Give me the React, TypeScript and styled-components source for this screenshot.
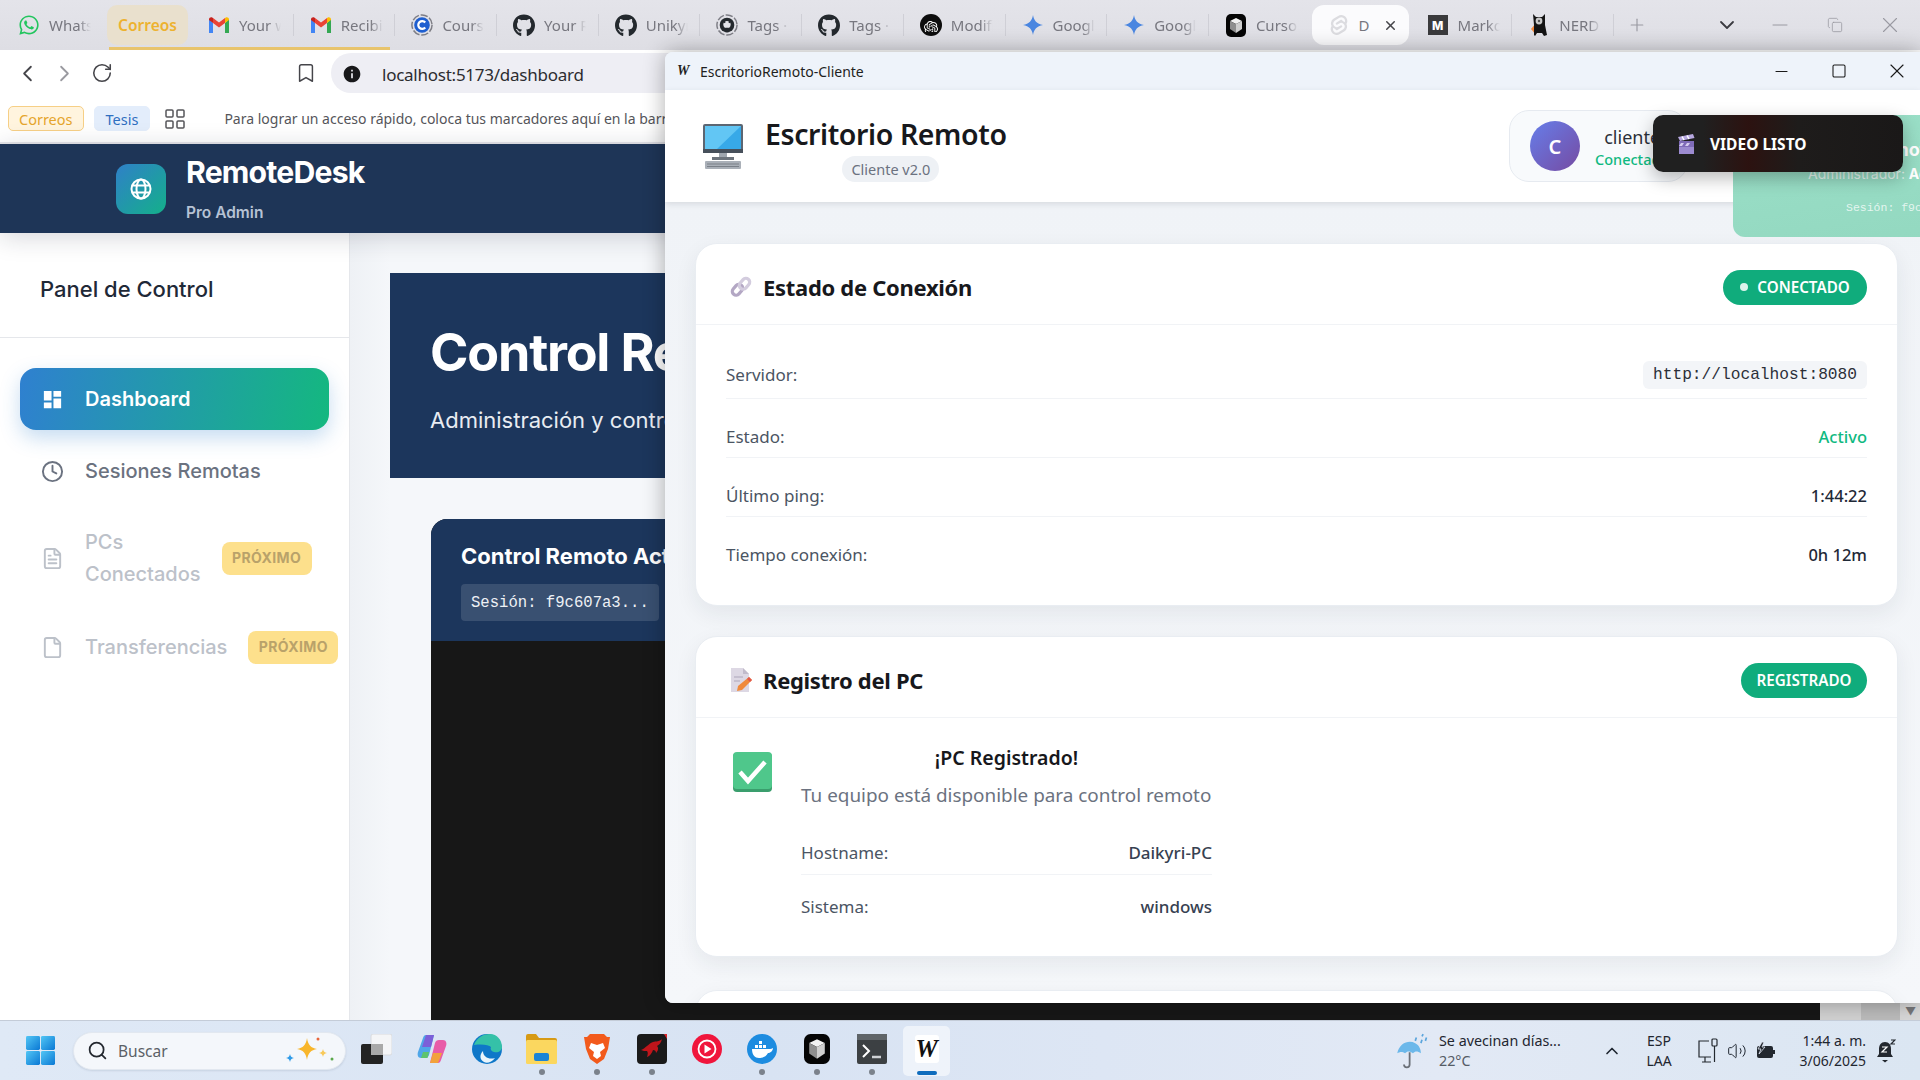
import React, { FC, ReactNode } from 'react'
import styled, { createGlobalStyle } from 'styled-components'
import {
  Bookmark,
  ChevronDown,
  ChevronLeft,
  ChevronRight,
  ChevronUp,
  Clock,
  Copy,
  File,
  FileText,
  LayoutGrid,
  Minus,
  Plus,
  RotateCw,
  Search,
  Square,
  Volume2,
  X,
} from 'lucide-react'
import { FaGithub, FaWhatsapp } from 'react-icons/fa'
import { MdDashboard, MdInfo } from 'react-icons/md'
import { SiOpenai, SiSvelte } from 'react-icons/si'

const SEGOE = `'Noto Sans', 'Open Sans', sans-serif`
const INTER = `Inter, 'Liberation Sans', sans-serif`
const MONO = `'Liberation Mono', 'DejaVu Sans Mono', monospace`

const GlobalStyle = createGlobalStyle`
  html, body {
    margin: 0;
    padding: 0;
    width: 1920px;
    height: 1080px;
    overflow: hidden;
    background: #fff;
  }
  * { box-sizing: border-box; }
`

const Desktop = styled.div`
  position: relative;
  width: 1920px;
  height: 1080px;
  display: flex;
  flex-direction: column;
  overflow: hidden;
  font-family: ${SEGOE};
`

/* ---------- browser ---------- */

const Browser = styled.div`
  flex: 1;
  min-height: 0;
  display: flex;
  flex-direction: column;
`

const TabStrip = styled.div`
  height: 50px;
  flex: none;
  display: flex;
  align-items: center;
  padding-left: 2px;
  background: linear-gradient(#e4e4ea, #dedee4);
`

const Tab = styled.div<{ $width?: number; $plain?: boolean }>`
  position: relative;
  width: ${({ $width }) => $width ?? 101.7}px;
  height: 40px;
  flex: none;
  display: flex;
  align-items: center;
  gap: 9px;
  padding-left: 16px;

  &::after {
    content: '';
    display: ${({ $plain }) => ($plain ? 'none' : 'block')};
    position: absolute;
    right: 0;
    top: 9px;
    bottom: 9px;
    width: 1px;
    background: #cfcfd6;
  }
`

const ActiveTab = styled(Tab)`
  background: #fbfbfd;
  border-radius: 12px;
  margin: 0 2px 0 1px;
`

const TabIconBox = styled.span`
  width: 22px;
  height: 24px;
  flex: none;
  display: flex;
  align-items: center;
  justify-content: center;
`

const TabLabel = styled.span`
  width: 42px;
  overflow: hidden;
  white-space: nowrap;
  font-size: 15px;
  color: #77777f;
  -webkit-mask-image: linear-gradient(90deg, #000 70%, transparent);
  mask-image: linear-gradient(90deg, #000 70%, transparent);
`

const ActiveLabel = styled.span`
  width: 15px;
  font-size: 15px;
  color: #77777f;
`

const TabGroup = styled.div`
  position: relative;
  display: flex;
  align-items: center;

  &::after {
    content: '';
    position: absolute;
    left: 2px;
    right: 5px;
    bottom: -5px;
    height: 3px;
    background: #e8c46c;
  }
`

const GroupChip = styled.div`
  width: 81px;
  height: 40px;
  margin-right: 4px;
  border-radius: 10px;
  display: flex;
  align-items: center;
  justify-content: center;
  background: #e9e0cd;
  color: #edb22f;
  font-size: 15.5px;
  font-weight: 600;
`

const StripButton = styled.span<{ $width: number; $color?: string }>`
  width: ${({ $width }) => $width}px;
  height: 40px;
  flex: none;
  display: flex;
  align-items: center;
  justify-content: center;
  color: ${({ $color }) => $color ?? '#9a9aa2'};
`

const WindowButtons = styled.div`
  margin-left: auto;
  padding-right: 3px;
  display: flex;
`

const Toolbar = styled.div`
  height: 46px;
  flex: none;
  display: flex;
  align-items: center;
  padding-left: 9px;
  background: #fff;
`

const NavButton = styled.span<{ $faded?: boolean }>`
  width: 37px;
  display: flex;
  justify-content: center;
  color: ${({ $faded }) => ($faded ? '#9a9aa0' : '#45454a')};
`

const BookmarkButton = styled(NavButton)`
  margin-left: 167px;
  margin-right: 7px;
`

const AddressBar = styled.div`
  flex: 1;
  height: 40px;
  display: flex;
  align-items: center;
  gap: 20px;
  padding: 2px 0 0 11px;
  border-radius: 20px 0 0 20px;
  background: #eeeef4;
  font-size: 17px;
  letter-spacing: -0.25px;
  color: #2c2c30;
`

const BookmarkBar = styled.div`
  height: 48px;
  flex: none;
  display: flex;
  align-items: center;
  padding: 0 0 1px 8px;
  background: #fff;
  border-bottom: 2px solid #e6e6ea;
  font-size: 14px;
  color: #55555a;
`

const BookmarkPill = styled.span<{ $tone: 'amber' | 'blue' }>`
  height: 25px;
  display: flex;
  align-items: center;
  padding: ${({ $tone }) => ($tone === 'amber' ? '0 10px' : '0 11px')};
  margin-right: 10px;
  border-radius: 5px;
  font-size: 14.5px;
  background: ${({ $tone }) => ($tone === 'amber' ? '#fff4de' : '#e3edfb')};
  border: 1px solid ${({ $tone }) => ($tone === 'amber' ? '#f6cf86' : '#e3edfb')};
  color: ${({ $tone }) => ($tone === 'amber' ? '#e5a52c' : '#2f6fc0')};
`

const BookmarkHint = styled.span`
  margin-left: 37px;
  white-space: nowrap;
`

const GridButton = styled.span`
  display: flex;
  margin-left: 3px;
  color: #55555a;
`

/* ---------- remote desk app ---------- */

const AppHeader = styled.header`
  position: relative;
  z-index: 2;
  height: 89px;
  flex: none;
  display: flex;
  align-items: center;
  gap: 20px;
  padding-left: 116px;
  background: #1e3557;
  box-shadow: 0 4px 24px rgba(20, 30, 50, 0.18);
`

const AppLogo = styled.div`
  width: 50px;
  height: 50px;
  border-radius: 12px;
  display: flex;
  align-items: center;
  justify-content: center;
  background: linear-gradient(135deg, #2f80c8, #14b08a);
`

const BrandText = styled.div`
  display: flex;
  flex-direction: column;
  gap: 16px;
  font-family: ${INTER};
`

const BrandName = styled.div`
  font-size: 30.2px;
  line-height: 32px;
  font-weight: 700;
  letter-spacing: -0.8px;
  color: #fff;
`

const BrandSub = styled.div`
  font-size: 15.5px;
  line-height: 18px;
  font-weight: 600;
  color: #b6c2d4;
`

const AppBody = styled.div`
  flex: 1;
  min-height: 0;
  display: flex;
  font-family: ${INTER};
`

const Sidebar = styled.aside`
  width: 350px;
  flex: none;
  background: #fff;
  border-right: 1px solid #e5e7eb;
`

const SidebarTitle = styled.div`
  height: 105px;
  padding: 41px 0 0 40px;
  border-bottom: 1px solid #e5e7eb;
  font-size: 22px;
  line-height: 30px;
  font-weight: 500;
  color: #1f2937;
`

const NavList = styled.nav`
  padding: 30px 12px 0 20px;
  display: flex;
  flex-direction: column;
`

const NavItem = styled.div<{ $active?: boolean; $disabled?: boolean; $height: number }>`
  height: ${({ $height }) => $height}px;
  margin-right: ${({ $active }) => ($active ? '8px' : '0')};
  display: flex;
  align-items: center;
  gap: 21px;
  padding-left: 21px;
  border-radius: 16px;
  font-size: 20px;
  line-height: 32px;
  font-weight: ${({ $active }) => ($active ? 600 : 500)};
  color: ${({ $active, $disabled }) => ($active ? '#fff' : $disabled ? '#bcc1c9' : '#6b7280')};
  background: ${({ $active }) => ($active ? 'linear-gradient(100deg, #2f80d0, #14b87f)' : 'none')};
  box-shadow: ${({ $active }) => ($active ? '0 8px 20px rgba(49, 130, 206, 0.28)' : 'none')};

  svg {
    flex: none;
    width: 23px;
    height: 23px;
  }
`

const SoonBadge = styled.span`
  flex: none;
  width: 90px;
  height: 33px;
  border-radius: 8px;
  display: flex;
  align-items: center;
  justify-content: center;
  background: #fde08c;
  color: #b9a26a;
  font-size: 14px;
  font-weight: 700;
  letter-spacing: 0.4px;
`

const PcsLabel = styled.span`
  width: min-content;
`

const Main = styled.main`
  position: relative;
  flex: 1;
  min-width: 0;
  overflow: hidden;
  padding: 40px 0 0 40px;
  background: linear-gradient(90deg, #eef1f5, #f5f7fa 40px);
`

const Hero = styled.section`
  width: 1500px;
  height: 205px;
  padding: 47px 0 0 40px;
  background: #1c365c;
  color: #fff;
`

const HeroTitle = styled.h1`
  margin: 0;
  font-size: 52px;
  line-height: 66px;
  font-weight: 700;
  letter-spacing: -1.2px;
  white-space: nowrap;
`

const HeroText = styled.p`
  margin: 19px 0 0;
  font-size: 22px;
  line-height: 30px;
  color: #e8ecf2;
  white-space: nowrap;
`

const RemotePanel = styled.section`
  width: 1389px;
  height: 800px;
  margin: 41px 0 0 41px;
  border-radius: 16px 16px 0 0;
  overflow: hidden;
  background: #171717;
`

const RemoteHead = styled.div`
  height: 122px;
  padding: 22px 0 0 30px;
  background: #1c365c;
  color: #fff;
`

const RemoteTitle = styled.div`
  font-size: 22px;
  line-height: 30px;
  font-weight: 700;
  white-space: nowrap;
`

const SessionTag = styled.div`
  width: 198px;
  height: 37px;
  margin-top: 13px;
  padding-left: 10px;
  border-radius: 4px;
  display: flex;
  align-items: center;
  background: rgba(255, 255, 255, 0.13);
  font-family: ${MONO};
  font-size: 15.6px;
  color: #eef1f5;
`

const ScrollCorner = styled.div`
  position: absolute;
  right: 0;
  bottom: 0;
  width: 100px;
  height: 17px;
  display: flex;
  justify-content: flex-end;
  align-items: center;
  padding-right: 4px;
  background: linear-gradient(90deg, #d2d2d2 41%, #bcbcbc 41%, #bcbcbc 80%, #d8d8d8 80%);
  color: #77777a;
  font-size: 11px;
  line-height: 1;
`

/* ---------- client window ---------- */

const ClientWindow = styled.div`
  position: absolute;
  z-index: 5;
  left: 665px;
  top: 52px;
  width: 1255px;
  height: 951px;
  display: flex;
  flex-direction: column;
  overflow: hidden;
  border-radius: 8px 0 0 8px;
  background: #f2f5f9;
  box-shadow: 0 0 22px rgba(0, 0, 0, 0.32);
`

const TitleBar = styled.div`
  height: 38px;
  flex: none;
  display: flex;
  align-items: center;
  padding-left: 12px;
  background: #eef3fa;
  font-size: 14px;
  color: #1f1f22;
`

const TitleLogo = styled.span`
  width: 23px;
  font-family: 'Liberation Serif', serif;
  font-size: 14px;
  font-weight: 700;
  font-style: italic;
`

const TitleButtons = styled.div`
  margin-left: auto;
  margin-right: -6px;
  display: flex;
  color: #1a1a1a;
`

const TitleButton = styled.span`
  width: 58px;
  display: flex;
  align-items: center;
  justify-content: center;
`

const ClientHeader = styled.header`
  height: 112px;
  flex: none;
  display: flex;
  align-items: center;
  padding: 0 232px 0 37px;
  background: #fff;
  box-shadow: 0 2px 6px rgba(30, 40, 60, 0.12);
  position: relative;
`

const HeaderText = styled.div`
  margin: 9px 0 0 21px;
  display: flex;
  flex-direction: column;
  align-items: center;
`

const HeaderTitle = styled.div`
  font-size: 28.5px;
  line-height: 38px;
  font-weight: 600;
  letter-spacing: -0.4px;
  color: #17181c;
  margin-top: -4px;
`

const Version = styled.span`
  height: 26px;
  margin: 3px 0 0 10px;
  padding: 0 9px;
  border-radius: 13px;
  display: flex;
  align-items: center;
  background: #eef1f5;
  color: #6b7280;
  font-size: 14.5px;
`

const UserChip = styled.div`
  width: 179px;
  height: 72px;
  margin-left: auto;
  padding-left: 20px;
  display: flex;
  align-items: center;
  gap: 15px;
  overflow: hidden;
  border: 1px solid #e6eaf0;
  border-radius: 20px;
  background: #f8fafc;
`

const Avatar = styled.div`
  width: 50px;
  height: 50px;
  flex: none;
  border-radius: 50%;
  display: flex;
  align-items: center;
  justify-content: center;
  background: linear-gradient(135deg, #667eea, #764ba2);
  color: #fff;
  font-size: 20px;
  font-weight: 600;
`

const UserText = styled.div`
  margin-top: 3px;
  display: flex;
  flex-direction: column;
  align-items: center;
  white-space: nowrap;
`

const UserName = styled.span`
  font-size: 18px;
  line-height: 22px;
  color: #2b2f38;
`

const UserState = styled.span`
  font-size: 14.5px;
  line-height: 22px;
  font-weight: 500;
  color: #10b981;
`

const ClientBody = styled.div`
  flex: 1;
  min-height: 0;
  padding: 41px 22px 0 30px;
  display: flex;
  flex-direction: column;
  gap: 30px;
  overflow: hidden;
  background: linear-gradient(#f0f3f7, #f5f7fa);
`

const Card = styled.section<{ $height: number }>`
  height: ${({ $height }) => $height}px;
  flex: none;
  border-radius: 22px;
  background: #fff;
  border: 1px solid #e9edf2;
  box-shadow: 0 8px 22px rgba(30, 40, 60, 0.07);
`

const NextCard = styled(Card)`
  margin-top: 3px;
`

const CardHead = styled.div`
  height: 81px;
  display: flex;
  align-items: center;
  padding: 6px 30px 0 33px;
  border-bottom: 1px solid #f1f3f6;
`

const CardTitle = styled.h2`
  margin: -1px 0 0 10px;
  font-size: 22px;
  line-height: 30px;
  font-weight: 700;
  letter-spacing: -0.3px;
  color: #17181c;
`

const StatusBadge = styled.span<{ $width: number }>`
  width: ${({ $width }) => $width}px;
  height: 35px;
  margin-left: auto;
  border-radius: 18px;
  display: flex;
  align-items: center;
  justify-content: center;
  gap: 9px;
  background: #10ac7c;
  color: #fff;
  font-size: 15.2px;
  font-weight: 600;
`

const Dot = styled.i`
  width: 8px;
  height: 8px;
  border-radius: 50%;
  background: #fff;
  opacity: 0.85;
`

const CardBody = styled.div`
  padding: 36px 30px 0;
`

const InfoRow = styled.div`
  display: flex;
  justify-content: space-between;
  align-items: center;
  padding: 27px 0 9px;
  font-size: 17px;
  line-height: 22px;
  color: #4b5563;
  border-bottom: 1px solid #f1f3f6;

  &:first-child {
    padding-top: 0;
  }

  &:last-child {
    border-bottom: none;
  }
`

const RowValue = styled.span<{ $ok?: boolean }>`
  font-size: 16.5px;
  font-weight: 500;
  color: ${({ $ok }) => ($ok ? '#10b981' : '#1f2937')};
`

const CodeValue = styled.code`
  width: 224px;
  height: 28px;
  border-radius: 6px;
  display: flex;
  align-items: center;
  justify-content: center;
  background: #f3f5f8;
  font-family: ${MONO};
  font-size: 16.2px;
  color: #2b2f38;
`

const RegisteredBody = styled.div`
  display: flex;
  padding: 34px 0 0 37px;
`

const RegisteredInfo = styled.div`
  width: 411px;
  margin: -7px 0 0 29px;
`

const RegisteredTitle = styled.div`
  font-size: 19.5px;
  line-height: 26px;
  font-weight: 600;
  text-align: center;
  color: #17181c;
`

const RegisteredText = styled.div`
  margin: 11px 0;
  font-size: 18.9px;
  line-height: 26px;
  color: #6b7280;
  white-space: nowrap;
`

const DetailRow = styled.div`
  display: flex;
  justify-content: space-between;
  padding: 22px 0 9px;
  font-size: 17px;
  line-height: 24px;
  color: #4b5563;
  border-bottom: 1px solid #f1f3f6;

  &:last-child {
    padding-top: 20px;
    border-bottom: none;
  }
`

const DetailValue = styled.span`
  font-weight: 500;
  color: #374151;
`

/* ---------- floating notices ---------- */

const GreenNotice = styled.div`
  position: absolute;
  z-index: 6;
  left: 1733px;
  top: 115px;
  width: 260px;
  height: 122px;
  border-radius: 12px;
  padding: 48px 0 0 75px;
  overflow: hidden;
  background: linear-gradient(170deg, #9be0c8, #93d8c0);
  color: rgba(255, 255, 255, 0.75);
  font-family: ${INTER};
  font-size: 14px;
  line-height: 22px;
  white-space: nowrap;

  b {
    color: #fff;
    font-weight: 700;
  }
`

const NoticeTitle = styled.span`
  position: absolute;
  left: 137px;
  top: 24px;
  color: #fff;
  font-size: 18px;
  font-weight: 700;
`

const NoticeSession = styled.div`
  margin: 12px 0 0 38px;
  font-family: ${MONO};
  font-size: 11.5px;
`

const VideoToast = styled.div`
  position: absolute;
  z-index: 7;
  left: 1653px;
  top: 115px;
  width: 250px;
  height: 57px;
  display: flex;
  align-items: center;
  gap: 15px;
  padding-left: 25px;
  border-radius: 10px;
  background: linear-gradient(90deg, #202020 20%, #2c1210 38%, #1e1c1b 58%, #1a1818);
  box-shadow: 0 6px 18px rgba(0, 0, 0, 0.28);
  color: #fff;
  font-size: 15.5px;
  font-weight: 700;
`

/* ---------- taskbar ---------- */

const Taskbar = styled.footer`
  height: 60px;
  flex: none;
  display: flex;
  align-items: center;
  position: relative;
  z-index: 8;
  border-top: 1px solid #c4ccd8;
  background: linear-gradient(90deg, #dfe9f6, #d8e3f3 40%, #e2e9f5 75%, #dbe6f2);
  color: #1f2630;
`

const StartButton = styled.span`
  width: 73px;
  padding-left: 26px;
  display: flex;
`

const SearchPill = styled.div`
  width: 273px;
  height: 38px;
  display: flex;
  align-items: center;
  gap: 10px;
  padding: 0 10px 0 13px;
  border-radius: 19px;
  background: #f4f7fb;
  border: 1px solid #e2e8f0;
  box-shadow: 0 1px 2px rgba(40, 60, 90, 0.12);
  font-size: 15.5px;
  color: #5b6066;
`

const Sparkles = styled.span`
  margin-left: auto;
  display: flex;
`

const AppTray = styled.div`
  display: flex;
  align-items: center;
  margin-left: 3px;
`

const TrayApp = styled.span<{ $open?: boolean; $active?: boolean }>`
  position: relative;
  width: ${({ $active }) => ($active ? '47px' : '55px')};
  height: 50px;
  margin-left: ${({ $active }) => ($active ? '4px' : '0')};
  flex: none;
  display: flex;
  align-items: center;
  justify-content: center;
  padding-bottom: 3px;
  border-radius: 5px;
  background: ${({ $active }) => ($active ? 'rgba(255, 255, 255, 0.55)' : 'none')};

  &::after {
    content: '';
    display: ${({ $open, $active }) => ($open || $active ? 'block' : 'none')};
    position: absolute;
    bottom: 1px;
    left: 50%;
    width: ${({ $active }) => ($active ? '20px' : '6px')};
    height: ${({ $active }) => ($active ? '4px' : '6px')};
    margin-left: ${({ $active }) => ($active ? '-10px' : '-3px')};
    border-radius: 3px;
    background: ${({ $active }) => ($active ? '#0f6cbd' : '#7b828c')};
  }
`

const Weather = styled.div`
  margin-left: auto;
  display: flex;
  align-items: center;
  gap: 9px;
  font-size: 14.3px;
  line-height: 20px;
`

const WeatherText = styled.div`
  width: 163px;
`

const MutedLine = styled.div`
  color: #555c66;
`

const SystemTray = styled.div`
  display: flex;
  align-items: center;
  font-size: 14px;
  line-height: 20px;
`

const Lang = styled.div`
  width: 28px;
  margin: 0 25px 0 23px;
  text-align: center;
`

const TrayIcons = styled.div`
  display: flex;
  align-items: center;
  gap: 9px;
`

const Clocks = styled.div`
  width: 90px;
  text-align: right;
`

const Bell = styled.span`
  width: 54px;
  padding-left: 10px;
  display: flex;
`

/* ---------- drawings ---------- */

const GmailIcon: FC = () => (
  <svg width='20' height='16' viewBox='0 0 20 16'>
    <path d='M0 2v14h4V6z' fill='#4285f4' />
    <path d='M16 6v10h4V2z' fill='#34a853' />
    <path d='M4 6l6 4.6L16 6V1l-6 4.6L4 1z' fill='#ea4335' />
    <path d='M0 2.2C0 .6 2 -.4 3.2.5L4 1.1V6L0 3z' fill='#c5221f' />
    <path d='M20 2.2c0-1.6-2-2.6-3.2-1.7L16 1.1V6l4-3z' fill='#fbbc04' />
  </svg>
)

const DashedRing: FC<{ children: ReactNode }> = ({ children }) => (
  <svg width='24' height='24' viewBox='0 0 24 24'>
    <circle cx='12' cy='12' r='11' fill='none' stroke='#7d7d85' strokeWidth='1.6' strokeDasharray='8 2' />
    {children}
  </svg>
)

const CourseIcon: FC = () => (
  <DashedRing>
    <circle cx='12' cy='12' r='8.5' fill='#1f5fd0' />
    <path d='M15.5 9.2a4.3 4.3 0 1 0 0 5.6' fill='none' stroke='#fff' strokeWidth='2.4' />
  </DashedRing>
)

const RingGithubIcon: FC = () => (
  <DashedRing>
    <circle cx='12' cy='12' r='8' fill='#24292e' />
    <circle cx='12' cy='11.5' r='4' fill='#e4e4ea' />
    <path d='M8.5 8l1.5 1.5M15.5 8L14 9.5' stroke='#24292e' strokeWidth='2' />
    <rect x='10.2' y='15' width='3.6' height='5' fill='#24292e' />
  </DashedRing>
)

const OpenAiIcon: FC = () => (
  <svg width='22' height='22' viewBox='0 0 22 22'>
    <circle cx='11' cy='11' r='11' fill='#0d0d0d' />
    <foreignObject x='4' y='4' width='14' height='14'>
      <SiOpenai size={14} color='#fff' />
    </foreignObject>
  </svg>
)

const StarIcon: FC = () => (
  <svg width='20' height='20' viewBox='0 0 20 20'>
    <path d='M10 0c.9 5.6 3.8 8.9 10 10-6.2 1.1-9.1 4.4-10 10-.9-5.6-3.8-8.9-10-10C6.2 8.9 9.1 5.6 10 0z' fill='#4a86e0' />
  </svg>
)

const CursorIcon: FC<{ size?: number }> = ({ size = 20 }) => (
  <svg width={size} height={size * 1.15} viewBox='0 0 20 23'>
    <rect width='20' height='23' rx='5' fill='#050505' />
    <path d='M4 7l6-3 6 3-6 3z' fill='#f2f2f2' />
    <path d='M4 7l6 3v9l-6-4z' fill='#8f8f8f' />
    <path d='M16 7l-6 3v9l6-4z' fill='#cfcfcf' />
  </svg>
)

const MarkBox = styled.span`
  width: 20px;
  height: 20px;
  display: flex;
  align-items: center;
  justify-content: center;
  background: #3a3a3c;
  color: #fff;
  font-family: ${INTER};
  font-size: 12px;
  font-weight: 800;
`

const OwlIcon: FC = () => (
  <svg width='18' height='24' viewBox='0 0 18 24'>
    <path d='M1 16l5-6v12z' fill='#f0883e' />
    <path d='M3 1l3 3h6l3-3v11l2 10-3 1-2-3H7l-2 3-1-1V12z' fill='#141414' />
    <circle cx='9' cy='8' r='3.4' fill='#c9c9c9' />
    <circle cx='9' cy='8' r='1.2' fill='#555' />
  </svg>
)

const BrowserLogo: FC = () => (
  <svg width='24' height='24' viewBox='0 0 24 24' fill='none' stroke='#fff' strokeWidth='2'>
    <circle cx='12' cy='12' r='9.5' />
    <ellipse cx='12' cy='12' rx='4.5' ry='9.5' />
    <path d='M3 8.5h18M3 15.5h18' />
  </svg>
)

const MonitorEmoji: FC = () => (
  <svg width='42' height='46' viewBox='0 0 42 46'>
    <rect x='1' y='1' width='40' height='27' rx='2' fill='#5c6672' />
    <rect x='3' y='3' width='36' height='23' fill='#37a9e8' />
    <path d='M3 3h36L15 26H3z' fill='#62c6f4' />
    <rect x='1' y='26' width='40' height='4' fill='#47505b' />
    <rect x='17' y='30' width='8' height='6' fill='#9fa6ae' />
    <rect x='10' y='34' width='22' height='3' fill='#6d747c' />
    <rect x='3' y='38' width='36' height='8' rx='1' fill='#aab0b8' />
    <path d='M5 41h32M5 43.5h32' stroke='#7a8088' strokeWidth='1' />
  </svg>
)

const LinkEmoji: FC = () => (
  <svg width='24' height='24' viewBox='0 0 24 24' fill='none' strokeWidth='3.2' strokeLinecap='round'>
    <rect x='2.5' y='11' width='12' height='7.5' rx='3.75' transform='rotate(-50 8.5 14.75)' stroke='#b3a7c4' />
    <rect x='9.5' y='5' width='12' height='7.5' rx='3.75' transform='rotate(-50 15.5 8.75)' stroke='#d3ccde' />
  </svg>
)

const MemoEmoji: FC = () => (
  <svg width='24' height='24' viewBox='-1 0 24 24'>
    <path d='M1 0h12l6 6v18H1z' fill='#ddd8e4' />
    <path d='M13 0l6 6h-6z' fill='#c1bbcb' />
    <path d='M4 9h9M4 13h6' stroke='#bdb6c8' strokeWidth='1.5' />
    <path d='M19 9l3 3-10 10-5 1 1-5z' fill='#f08a3c' />
    <path d='M19 9l3 3-2 2-3-3z' fill='#e2574c' />
  </svg>
)

const CheckEmoji: FC = () => (
  <svg width='39' height='40' viewBox='0 0 39 40'>
    <rect x='0' y='1' width='39' height='39' rx='4' fill='#3a9e6d' />
    <rect x='0' y='0' width='39' height='37' rx='4' fill='#4fc78b' />
    <path d='M7 20l8 9L32 10' fill='none' stroke='#fff' strokeWidth='4.5' />
  </svg>
)

const ClapperEmoji: FC = () => (
  <svg width='17' height='20' viewBox='0 0 17 20'>
    <rect x='1' y='7' width='15' height='13' fill='#7f6bb8' />
    <rect x='1' y='13' width='15' height='7' fill='#9c8bd0' />
    <path d='M0 3l15-3 1.5 4L2 7z' fill='#b7a8e0' />
    <path d='M4 2.5l2 3.5M9 1.5l2 3.5' stroke='#fff' strokeWidth='1.5' />
    <path d='M3 9h3l-2 3H1zM9 9h3l-2 3H7z' fill='#d6ccf0' />
  </svg>
)

const WindowsLogo: FC = () => (
  <svg width='29' height='29' viewBox='0 0 30 30'>
    <defs>
      <linearGradient id='winBlue' x1='0' y1='0' x2='1' y2='1'>
        <stop offset='0' stopColor='#52c6f5' />
        <stop offset='1' stopColor='#0a78d4' />
      </linearGradient>
    </defs>
    <rect x='0' y='0' width='14.5' height='14.5' rx='1.5' fill='url(#winBlue)' />
    <rect x='15.5' y='0' width='14.5' height='14.5' rx='1.5' fill='url(#winBlue)' />
    <rect x='0' y='15.5' width='14.5' height='14.5' rx='1.5' fill='url(#winBlue)' />
    <rect x='15.5' y='15.5' width='14.5' height='14.5' rx='1.5' fill='url(#winBlue)' />
  </svg>
)

const SparkleIcon: FC = () => (
  <svg width='50' height='30' viewBox='0 0 50 30'>
    <path d='M22 2c1 7 4 10 10 11-6 1-9 4-10 11-1-7-4-10-10-11 6-1 9-4 10-11z' fill='#f8b62b' />
    <path d='M5 18c.4 2.5 1.5 3.6 4 4-2.5.4-3.6 1.5-4 4-.4-2.5-1.5-3.6-4-4 2.5-.4 3.6-1.5 4-4z' fill='#2f9be8' />
    <path d='M38 13c.4 2.5 1.5 3.6 4 4-2.5.4-3.6 1.5-4 4-.4-2.5-1.5-3.6-4-4 2.5-.4 3.6-1.5 4-4z' fill='#f8c95a' />
    <circle cx='33' cy='3' r='1.5' fill='#e8663c' />
    <circle cx='47' cy='23' r='1.5' fill='#5aa84a' />
  </svg>
)

const TaskViewIcon: FC = () => (
  <svg width='31' height='30' viewBox='0 0 31 30'>
    <rect x='10' y='0' width='21' height='21' rx='2' fill='#f4f5f7' stroke='#d8dade' />
    <rect x='0' y='10' width='22' height='20' rx='2' fill='#232323' />
    <rect x='10' y='10' width='12' height='11' fill='#a9a9a9' />
  </svg>
)

const CopilotIcon: FC = () => (
  <svg width='30' height='30' viewBox='0 0 30 30'>
    <path d='M9 1h8l-5 20c-.6 2-2 3-4 3H4C1 24 0 21 1 18l5-14c.6-2 1.5-3 3-3z' fill='#4fa6e8' />
    <path d='M9 1h8l-3 12H5z' fill='#7b5fd8' />
    <path d='M21 29h-8l5-20c.6-2 2-3 4-3h4c3 0 4 3 3 6l-5 14c-.6 2-1.5 3-3 3z' fill='#e85ca8' />
    <path d='M21 29h-8l3-10h9z' fill='#f2a23c' />
    <path d='M6 18h6l-1.5 6H4z' fill='#5ec46c' />
  </svg>
)

const EdgeIcon: FC = () => (
  <svg width='30' height='30' viewBox='0 0 30 30'>
    <circle cx='15' cy='15' r='15' fill='#0f77c8' />
    <path d='M2 11C5 3 12 0 18 0c7 0 12 6 12 13 0 4-4 6-8 5-3-.8-4-3-3-5-2-2-8-3-17-2z' fill='#35c1a8' />
    <path d='M11 17c0 6 6 9 12 7-3 4-8 6-11 4-4-2-5-7-1-11z' fill='#e9f4fb' />
  </svg>
)

const FolderIcon: FC = () => (
  <svg width='31' height='30' viewBox='0 0 31 30'>
    <path d='M0 2a2 2 0 0 1 2-2h8l3 4h16a2 2 0 0 1 2 2v3H0z' fill='#d79a14' />
    <rect x='0' y='6' width='31' height='24' rx='1.5' fill='#fbd75f' />
    <rect x='8' y='19' width='15' height='8' rx='2' fill='#1b84d6' />
  </svg>
)

const BraveIcon: FC = () => (
  <svg width='26' height='30' viewBox='0 0 26 30'>
    <path d='M6 0h14l3 3 3 0-2 12-4 10-7 5-7-5-4-10L0 3l3 0z' fill='#f25a1c' />
    <path d='M7 9l6 2 6-2 2 5-5 4 1 4-4 3-4-3 1-4-5-4z' fill='#fff' />
  </svg>
)

const MsiIcon: FC = () => (
  <svg width='30' height='30' viewBox='0 0 30 30'>
    <rect width='30' height='30' rx='4' fill='#1a1a1a' />
    <path d='M4 16c5-2 7-6 12-8 3-1 6 0 9-3-1 4-3 6-5 7 2 2 1 5-1 7 0-2-1-3-3-3-1 3-3 6-6 7 1-3 1-5 0-6-2 0-4 0-6-1z' fill='#c0151b' />
    <path d='M27 0h3v5z' fill='#d8252b' />
  </svg>
)

const MusicIcon: FC = () => (
  <svg width='30' height='30' viewBox='0 0 30 30'>
    <circle cx='15' cy='15' r='15' fill='#f0153c' />
    <circle cx='15' cy='15' r='8.5' fill='none' stroke='#fff' strokeWidth='1.8' />
    <path d='M12.5 10.5l7 4.5-7 4.5z' fill='#fff' />
  </svg>
)

const DockerIcon: FC = () => (
  <svg width='30' height='30' viewBox='0 0 30 30'>
    <circle cx='15' cy='15' r='15' fill='#1d8ce0' />
    <path d='M5 15h18c1 0 2-.6 3-1 0 3-3 5-5 5-2 4-6 5-9 5-4 0-7-3-7-9z' fill='#fff' />
    <path d='M8 11h3v3H8zM12 11h3v3h-3zM16 11h3v3h-3zM12 7h3v3h-3z' fill='#fff' />
  </svg>
)

const TerminalIcon: FC = () => (
  <svg width='30' height='30' viewBox='0 0 30 30'>
    <rect width='30' height='30' rx='2' fill='#3c4043' />
    <rect width='30' height='6' fill='#5f6468' />
    <path d='M6 11l6 6-6 6' fill='none' stroke='#fff' strokeWidth='2' />
    <path d='M15 23h9' stroke='#cfd2d6' strokeWidth='2.5' />
  </svg>
)

const WBox = styled.span`
  width: 24px;
  height: 28px;
  display: flex;
  align-items: center;
  justify-content: center;
  border-radius: 3px;
  background: #fff;
  color: #111;
  font-family: 'Liberation Serif', serif;
  font-size: 25px;
  font-weight: 700;
  font-style: italic;
`

const RainIcon: FC = () => (
  <svg width='34' height='36' viewBox='0 0 30 32'>
    <path d='M1 18C3 9 11 6 17 9c4 2 5 6 5 9-3-2-5-2-7 0-3-2-5-2-7 0-3-2-5-1-7 0z' fill='#6cb8ea' />
    <path d='M12 17v11a2.5 2.5 0 0 1-5 0' fill='none' stroke='#6b7078' strokeWidth='1.6' />
    <path d='M18 4l-1 3M23 6l-1 3M27 4l-1 3M24 1l-1 2' stroke='#5ba5dc' strokeWidth='1.5' />
  </svg>
)

const NetworkIcon: FC = () => (
  <svg width='20' height='26' viewBox='0 0 20 26' fill='none' stroke='#23282f' strokeWidth='1.2'>
    <path d='M11 3H1v16h12' />
    <path d='M4 24h9M7 19v5' />
    <rect x='14' y='1' width='5' height='7' rx='1' />
    <path d='M16.5 8v16' />
  </svg>
)

const BatteryIcon: FC = () => (
  <svg width='20' height='18' viewBox='0 0 20 18'>
    <rect x='1' y='4' width='16' height='12' rx='2' fill='#23282f' />
    <rect x='17' y='8' width='2' height='4' fill='#23282f' />
    <path d='M6 0L2 7h3l-2 5 6-7H6l2-5z' fill='#23282f' stroke='#e2e9f5' strokeWidth='0.8' />
  </svg>
)

const SleepBell: FC = () => (
  <svg width='20' height='24' viewBox='0 0 20 24'>
    <path d='M9 3c4 0 6 3 6 7v5l2 3H1l2-3v-5c0-4 2-7 6-7z' fill='#23282f' />
    <path d='M6 21h6l-3 2.5z' fill='#23282f' />
    <path d='M6 8h5l-5 5h5' fill='none' stroke='#fff' strokeWidth='1.2' />
    <path d='M15 1h4l-4 4h4' fill='none' stroke='#23282f' strokeWidth='1.2' />
  </svg>
)

/* ---------- data ---------- */

const groupedTabs: [ReactNode, string][] = [
  [<GmailIcon key='g1' />, 'Your w'],
  [<GmailIcon key='g2' />, 'Recibidos'],
]

const moreTabs: [ReactNode, string][] = [
  [<CourseIcon key='c' />, 'Courses'],
  [<FaGithub key='h1' size={23} color='#24292e' />, 'Your Repos'],
  [<FaGithub key='h2' size={23} color='#24292e' />, 'Unikyri'],
  [<RingGithubIcon key='h3' />, 'Tags · '],
  [<FaGithub key='h4' size={23} color='#24292e' />, 'Tags · '],
  [<OpenAiIcon key='o' />, 'Modificar'],
  [<StarIcon key='s1' />, 'Google'],
  [<StarIcon key='s2' />, 'Google'],
]

const trayApps: [ReactNode, boolean][] = [
  [<CopilotIcon key='a' />, false],
  [<EdgeIcon key='b' />, false],
  [<FolderIcon key='c' />, true],
  [<BraveIcon key='d' />, true],
  [<MsiIcon key='e' />, true],
  [<MusicIcon key='f' />, false],
  [<DockerIcon key='g' />, true],
  [<CursorIcon key='h' size={26} />, true],
  [<TerminalIcon key='i' />, true],
]

const App: FC = () => (
  <Desktop>
    <GlobalStyle />
    <Browser>
      <TabStrip>
        <Tab $width={105} $plain>
          <TabIconBox><FaWhatsapp size={22} color='#22c55e' /></TabIconBox>
          <TabLabel>WhatsApp</TabLabel>
        </Tab>
        <TabGroup>
          <GroupChip>Correos</GroupChip>
          {groupedTabs.map(([icon, label]) => (
            <Tab key={label}>
              <TabIconBox>{icon}</TabIconBox>
              <TabLabel>{label}</TabLabel>
            </Tab>
          ))}
        </TabGroup>
        {moreTabs.map(([icon, label], i) => (
          <Tab key={label + i}>
            <TabIconBox>{icon}</TabIconBox>
            <TabLabel>{label}</TabLabel>
          </Tab>
        ))}
        <Tab $plain>
          <TabIconBox><CursorIcon /></TabIconBox>
          <TabLabel>Cursor</TabLabel>
        </Tab>
        <ActiveTab $width={97} $plain>
          <TabIconBox><SiSvelte size={20} color='#dcdce0' /></TabIconBox>
          <ActiveLabel>D</ActiveLabel>
          <X size={15} color='#45454a' strokeWidth={2.4} />
        </ActiveTab>
        <Tab>
          <TabIconBox><MarkBox>M</MarkBox></TabIconBox>
          <TabLabel>Markdown</TabLabel>
        </Tab>
        <Tab>
          <TabIconBox><OwlIcon /></TabIconBox>
          <TabLabel>NERD</TabLabel>
        </Tab>
        <StripButton $width={46}><Plus size={20} strokeWidth={1.4} /></StripButton>
        <WindowButtons>
          <StripButton $width={50} $color='#3a3a40'><ChevronDown size={24} strokeWidth={1.8} /></StripButton>
          <StripButton $width={55}><Minus size={24} strokeWidth={1} /></StripButton>
          <StripButton $width={55}><Copy size={16} strokeWidth={1.2} /></StripButton>
          <StripButton $width={55}><X size={26} strokeWidth={1} /></StripButton>
        </WindowButtons>
      </TabStrip>

      <Toolbar>
        <NavButton><ChevronLeft size={27} strokeWidth={1.6} /></NavButton>
        <NavButton $faded><ChevronRight size={27} strokeWidth={1.6} /></NavButton>
        <NavButton><RotateCw size={22} strokeWidth={1.7} /></NavButton>
        <BookmarkButton><Bookmark size={22} strokeWidth={1.6} /></BookmarkButton>
        <AddressBar>
          <MdInfo size={20} color='#18181a' />
          localhost:5173/dashboard
        </AddressBar>
      </Toolbar>

      <BookmarkBar>
        <BookmarkPill $tone='amber'>Correos</BookmarkPill>
        <BookmarkPill $tone='blue'>Tesis</BookmarkPill>
        <GridButton><LayoutGrid size={24} strokeWidth={1.5} /></GridButton>
        <BookmarkHint>Para lograr un acceso rápido, coloca tus marcadores aquí en la barra de marcadores.</BookmarkHint>
      </BookmarkBar>

      <AppHeader>
        <AppLogo><BrowserLogo /></AppLogo>
        <BrandText>
          <BrandName>RemoteDesk</BrandName>
          <BrandSub>Pro Admin</BrandSub>
        </BrandText>
      </AppHeader>

      <AppBody>
        <Sidebar>
          <SidebarTitle>Panel de Control</SidebarTitle>
          <NavList>
            <NavItem $active $height={62}>
              <MdDashboard />
              Dashboard
            </NavItem>
            <NavItem $height={82}>
              <Clock strokeWidth={2} />
              Sesiones Remotas
            </NavItem>
            <NavItem $disabled $height={92}>
              <FileText strokeWidth={2} />
              <PcsLabel>PCs Conectados</PcsLabel>
              <SoonBadge>PRÓXIMO</SoonBadge>
            </NavItem>
            <NavItem $disabled $height={86}>
              <File strokeWidth={2} />
              Transferencias
              <SoonBadge>PRÓXIMO</SoonBadge>
            </NavItem>
          </NavList>
        </Sidebar>

        <Main>
          <Hero>
            <HeroTitle>Control Remoto</HeroTitle>
            <HeroText>Administración y control de sesiones remotas</HeroText>
          </Hero>
          <RemotePanel>
            <RemoteHead>
              <RemoteTitle>Control Remoto Activo</RemoteTitle>
              <SessionTag>Sesión: f9c607a3...</SessionTag>
            </RemoteHead>
          </RemotePanel>
          <ScrollCorner>▼</ScrollCorner>
        </Main>
      </AppBody>
    </Browser>

    <ClientWindow>
      <TitleBar>
        <TitleLogo>W</TitleLogo>
        EscritorioRemoto-Cliente
        <TitleButtons>
          <TitleButton><Minus size={19} strokeWidth={1.3} /></TitleButton>
          <TitleButton><Square size={16} strokeWidth={1.6} /></TitleButton>
          <TitleButton><X size={24} strokeWidth={1.1} /></TitleButton>
        </TitleButtons>
      </TitleBar>

      <ClientHeader>
        <MonitorEmoji />
        <HeaderText>
          <HeaderTitle>Escritorio Remoto</HeaderTitle>
          <Version>Cliente v2.0</Version>
        </HeaderText>
        <UserChip>
          <Avatar>C</Avatar>
          <UserText>
            <UserName>cliente</UserName>
            <UserState>Conectado</UserState>
          </UserText>
        </UserChip>
      </ClientHeader>

      <ClientBody>
        <Card $height={363}>
          <CardHead>
            <LinkEmoji />
            <CardTitle>Estado de Conexión</CardTitle>
            <StatusBadge $width={144}><Dot />CONECTADO</StatusBadge>
          </CardHead>
          <CardBody>
            <InfoRow>Servidor:<CodeValue>http://localhost:8080</CodeValue></InfoRow>
            <InfoRow>Estado:<RowValue $ok>Activo</RowValue></InfoRow>
            <InfoRow>Último ping:<RowValue>1:44:22</RowValue></InfoRow>
            <InfoRow>Tiempo conexión:<RowValue>0h 12m</RowValue></InfoRow>
          </CardBody>
        </Card>

        <Card $height={321}>
          <CardHead>
            <MemoEmoji />
            <CardTitle>Registro del PC</CardTitle>
            <StatusBadge $width={126}>REGISTRADO</StatusBadge>
          </CardHead>
          <RegisteredBody>
            <CheckEmoji />
            <RegisteredInfo>
              <RegisteredTitle>¡PC Registrado!</RegisteredTitle>
              <RegisteredText>Tu equipo está disponible para control remoto</RegisteredText>
              <DetailRow>Hostname:<DetailValue>Daikyri-PC</DetailValue></DetailRow>
              <DetailRow>Sistema:<DetailValue>windows</DetailValue></DetailRow>
            </RegisteredInfo>
          </RegisteredBody>
        </Card>

        <NextCard $height={200} />
      </ClientBody>
    </ClientWindow>

    <GreenNotice>
      <NoticeTitle>Remoto</NoticeTitle>
      Administrador: <b>Admin</b>
      <NoticeSession>Sesión: f9c607a3</NoticeSession>
    </GreenNotice>

    <VideoToast>
      <ClapperEmoji />
      VIDEO LISTO
    </VideoToast>

    <Taskbar>
      <StartButton><WindowsLogo /></StartButton>
      <SearchPill>
        <Search size={21} color='#23282f' strokeWidth={2} />
        Buscar
        <Sparkles><SparkleIcon /></Sparkles>
      </SearchPill>
      <AppTray>
        <TrayApp><TaskViewIcon /></TrayApp>
        {trayApps.map(([icon, open], i) => (
          <TrayApp key={i} $open={open}>{icon}</TrayApp>
        ))}
        <TrayApp $active><WBox>W</WBox></TrayApp>
      </AppTray>
      <Weather>
        <RainIcon />
        <WeatherText>
          Se avecinan días...
          <MutedLine>22°C</MutedLine>
        </WeatherText>
      </Weather>
      <SystemTray>
        <ChevronUp size={20} strokeWidth={2} />
        <Lang>ESP<br />LAA</Lang>
        <TrayIcons>
          <NetworkIcon />
          <Volume2 size={20} strokeWidth={1.2} />
          <BatteryIcon />
        </TrayIcons>
        <Clocks>1:44 a. m.<br />3/06/2025</Clocks>
        <Bell><SleepBell /></Bell>
      </SystemTray>
    </Taskbar>
  </Desktop>
)

export default App
